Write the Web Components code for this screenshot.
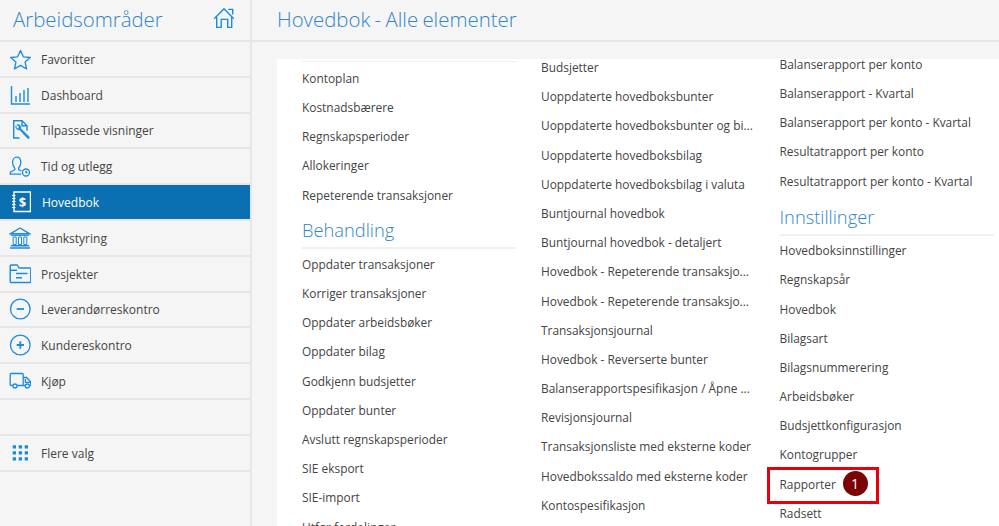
<!DOCTYPE html>
<html lang="no">
<head>
<meta charset="utf-8">
<title>Hovedbok - Alle elementer</title>
<style>
html, body { margin: 0; height: 100%; overflow: hidden; }
body { font: 12px "Open Sans", "Liberation Sans", sans-serif; color: #3f3f3f; background: #f5f5f5; }
svg { display: block; }
</style>
</head>
<body>
<template id="shell-tpl">
    <style>
        :host { display: grid; grid-template-columns: 252px 1fr; height: 526px; overflow: hidden; }
    </style>
    <slot name="side"></slot>
    <slot name="main"></slot>
</template>

<template id="sidebar-tpl">
    <style>
        :host { display: block; height: 526px; box-sizing: border-box; background: #f5f5f5; border-right: 2px solid #e6e6e6; overflow: hidden; }
        header { height: 40px; display: flex; align-items: center; justify-content: space-between; padding: 0 16px 0 13px; border-bottom: 2px solid #e6e6e6; }
        h1 { margin: 0 0 2px; font: 300 20.4px "Open Sans", sans-serif; color: #2f86c9; }
        ::slotted(svg) { margin-bottom: 5px; }
    </style>
    <header><h1 class="title"></h1><slot name="home"></slot></header>
    <slot></slot>
</template>

<template id="nav-item-tpl">
    <style>
        :host { display: flex; align-items: center; height: 35.8px; box-sizing: border-box; border-bottom: 2px solid #e6e6e6; color: #444; padding-left: 9px; gap: 10px; }
        :host([active]) { background: #0a70b2; color: #fff; }
        :host([active]) .label { margin-left: 1px; }
        .icon { width: 22px; height: 22px; flex: none; color: #1a8cde; }
        .label { padding-top: 1px; }
        :host([active]) .icon { color: #fff; }
    </style>
    <div class="icon"><slot name="icon"></slot></div>
    <span class="label"><slot></slot></span>
</template>

<template id="main-tpl">
    <style>
        :host { display: block; height: 526px; overflow: hidden; }
        header { height: 40px; display: flex; align-items: center; padding-left: 25px; border-bottom: 2px solid #e6e6e6; }
        h2 { margin: 0 0 3px; font: 300 20.4px "Open Sans", sans-serif; color: #2f86c9; word-spacing: -1px; }
        .panel { margin: 17px 0 0 25px; height: 467px; background: #fff; padding-left: 25px; display: grid; grid-template-columns: repeat(3, 214px); column-gap: 25px; overflow: hidden; align-items: start; font-size: 11.9px; }
    </style>
    <header><h2 class="title"></h2></header>
    <div class="panel"><slot></slot></div>
</template>

<template id="menu-column-tpl">
    <style>
        :host { display: block; }
    </style>
    <slot></slot>
</template>

<template id="menu-section-tpl">
    <style>
        :host { display: block; }
        h3 { margin: 0; height: 34px; box-sizing: border-box; font: 300 18.3px/29px "Open Sans", sans-serif; color: #2f86c9; border-bottom: 2px solid #f0f0f0; }
    </style>
    <h3 class="title"></h3>
    <slot></slot>
</template>

<template id="menu-link-tpl">
    <style>
        :host { display: flex; align-items: center; height: 29.2px; color: #444; white-space: nowrap; position: relative; }
        :host([marked]) .mark { display: block; }
        .mark { display: none; position: absolute; left: -13px; top: -2px; width: 112px; height: 37px; box-sizing: border-box; border: 3px solid #e8000d; }
        .badge { display: none; position: absolute; left: 63px; top: 2px; width: 25px; height: 25px; border-radius: 50%; background: #7a0303; color: #fff; font-size: 14px; line-height: 25px; text-align: center; }
        :host([marked]) .badge { display: block; }
    </style>
    <slot></slot>
    <div class="mark"></div>
    <div class="badge"></div>
</template>

<app-shell>
    <side-bar slot="side" heading="Arbeidsområder">
        <svg slot="home" width="21" height="21" viewBox="0 0 21 21" fill="none" stroke="#1a8cde" stroke-width="1.4"><path d="M1.2 11.800 11 1.800l9.800 10"/><path d="M3.700 10v10.400h4.500v-8h6.500v8h4V10"/><path d="M15.300 2.400h4.400v5"/></svg>
        <nav-item>
            <svg slot="icon" width="22" height="22" viewBox="0 0 22 22" fill="none" stroke="currentColor" stroke-width="1.300" stroke-linejoin="round"><path d="M11.500 2.500l2.900 6.300 6.900.7-5.200 4.600 1.500 6.900-6.100-3.600-6.100 3.600 1.500-6.900-5.200-4.600 6.900-.7z"/></svg>
            Favoritter
        </nav-item>
        <nav-item>
            <svg slot="icon" width="22" height="22" viewBox="0 0 22 22" fill="none" stroke="currentColor" stroke-width="1.400"><path d="M2.500 2v18h18.500"/><path d="M7 12v6M11 9v9M15 6v12M19 4v14"/></svg>
            Dashboard
        </nav-item>
        <nav-item>
            <svg slot="icon" width="22" height="22" viewBox="0 0 22 22" fill="none" stroke="currentColor" stroke-width="1.400"><path d="M10.500 19H4.700V1.700H13l5 5v5"/><path d="M13 1.700v5h5"/><path d="M7 6.500c-1 2.500 1 5 3.500 4.300l8 8.500c1 1 2.500-.5 1.600-1.600l-8.300-8.300c.7-2.500-1.500-4.600-4-3.800l2.200 2-.5 1.800-1.800.4z" fill="currentColor" stroke-width=".5"/></svg>
            Tilpassede visninger
        </nav-item>
        <nav-item>
            <svg slot="icon" width="22" height="22" viewBox="0 0 22 22" fill="none" stroke="currentColor" stroke-width="1.300"><path d="M5.800 13c-1.600-1.700-2.200-3.700-2.200-5.800 0-3 1.800-5 4.200-5s4 2 4 5c0 2.100-.6 4.100-2.200 5.800v1.700l2.800 1.300"/><path d="M5.800 13v1.700l-4.500 2.500v2h11"/><circle cx="17" cy="17.500" r="3.500"/><path d="M17 15.700v1.800h1.600"/></svg>
            Tid og utlegg
        </nav-item>
        <nav-item active>
            <svg slot="icon" width="22" height="22" viewBox="0 0 22 22" fill="none" stroke="currentColor" stroke-width="1.400"><path d="M5 1h16.500v19.500H5z"/><path d="M3 4.500h3.500M3 7.500h3.500M3 10.500h3.500M3 13.500h3.500M3 16.500h3.500" stroke-width="1.200"/><text x="13.500" y="15.500" font-size="13" font-weight="700" text-anchor="middle" fill="currentColor" stroke="none">$</text></svg>
            Hovedbok
        </nav-item>
        <nav-item>
            <svg slot="icon" width="22" height="22" viewBox="0 0 22 22" fill="none" stroke="currentColor"><path d="M11 1 1.300 6.800h19.400z" stroke-width="1.400"/><path d="M2 8.200h18" stroke-width="1.400"/><path d="M4.200 10h3v7.500h-3zM9.500 10h3v7.500h-3zM14.800 10h3v7.500h-3z" stroke-width="1"/><path d="M2 18.800h18M1 21h20" stroke-width="1.400"/></svg>
            Bankstyring
        </nav-item>
        <nav-item>
            <svg slot="icon" width="22" height="22" viewBox="0 0 22 22" fill="none" stroke="currentColor" stroke-width="1.400" stroke-linejoin="round"><path d="M1.200 3v15.500a1 1 0 0 0 1 1h18.600a1 1 0 0 0 1-1V6a1 1 0 0 0-1-1H10L8.300 2H2.200a1 1 0 0 0-1 1z"/><path d="M1.200 7.300H8M7 10.500h11.500M7 14.800h6"/></svg>
            Prosjekter
        </nav-item>
        <nav-item>
            <svg slot="icon" width="22" height="22" viewBox="0 0 22 22" fill="none" stroke="currentColor" stroke-width="1.300"><circle cx="11.300" cy="11" r="9.800"/><path d="M7.700 11h7.300" stroke-width="1.800"/></svg>
            Leverandørreskontro
        </nav-item>
        <nav-item>
            <svg slot="icon" width="22" height="22" viewBox="0 0 22 22" fill="none" stroke="currentColor" stroke-width="1.300"><circle cx="11.300" cy="11" r="9.800"/><path d="M7.700 11h7.300M11.300 7.300v7.400" stroke-width="1.800"/></svg>
            Kundereskontro
        </nav-item>
        <nav-item>
            <svg slot="icon" width="22" height="22" viewBox="0 0 22 22" fill="none" stroke="currentColor" stroke-width="1.300" stroke-linejoin="round"><path d="M3.800 15.500H2.200a1 1 0 0 1-1-1V4.500a1 1 0 0 1 1-1h11a1 1 0 0 1 1 1v11H8.300"/><path d="M14.200 7.500h3.500l4 4.500v3.500h-1.200M14.200 15.500h1.900M16.300 9v3.300h5"/><circle cx="6" cy="16" r="2"/><circle cx="18.300" cy="16" r="2"/></svg>
            Kjøp
        </nav-item>
        <nav-item></nav-item>
        <nav-item>
            <svg slot="icon" width="22" height="22" viewBox="0 0 22 22" fill="currentColor"><path d="M3.700 3.300H7v3.300H3.700zM9.700 3.300H13v3.300H9.700zM15.700 3.300H19v3.300h-3.300zM3.700 9.300H7v3.300H3.700zM9.700 9.300H13v3.300H9.700zM15.700 9.300H19v3.300h-3.300zM3.700 15.300H7v3.300H3.700zM9.700 15.300H13v3.300H9.700zM15.700 15.300H19v3.300h-3.300z"/></svg>
            Flere valg
        </nav-item>
    </side-bar>

    <main-view slot="main" heading="Hovedbok - Alle elementer">
        <menu-column style="margin-top:2px">
            <div style="height:1px;background:#f0f0f0;margin-bottom:1.300px"></div>
            <menu-link>Kontoplan</menu-link>
            <menu-link>Kostnadsbærere</menu-link>
            <menu-link>Regnskapsperioder</menu-link>
            <menu-link>Allokeringer</menu-link>
            <menu-link>Repeterende transaksjoner</menu-link>
            <menu-section heading="Behandling" style="margin-top:6px">
                <menu-link>Oppdater transaksjoner</menu-link>
                <menu-link>Korriger transaksjoner</menu-link>
                <menu-link>Oppdater arbeidsbøker</menu-link>
                <menu-link>Oppdater bilag</menu-link>
                <menu-link>Godkjenn budsjetter</menu-link>
                <menu-link>Oppdater bunter</menu-link>
                <menu-link>Avslutt regnskapsperioder</menu-link>
                <menu-link>SIE eksport</menu-link>
                <menu-link>SIE-import</menu-link>
                <menu-link>Utfør fordelinger</menu-link>
            </menu-section>
        </menu-column>
        <menu-column style="margin-top:-6.600px">
            <menu-link>Budsjetter</menu-link>
            <menu-link>Uoppdaterte hovedboksbunter</menu-link>
            <menu-link>Uoppdaterte hovedboksbunter og bi...</menu-link>
            <menu-link>Uoppdaterte hovedboksbilag</menu-link>
            <menu-link>Uoppdaterte hovedboksbilag i valuta</menu-link>
            <menu-link>Buntjournal hovedbok</menu-link>
            <menu-link>Buntjournal hovedbok - detaljert</menu-link>
            <menu-link>Hovedbok - Repeterende transaksjo...</menu-link>
            <menu-link>Hovedbok - Repeterende transaksjo...</menu-link>
            <menu-link>Transaksjonsjournal</menu-link>
            <menu-link>Hovedbok - Reverserte bunter</menu-link>
            <menu-link>Balanserapportspesifikasjon / Åpne ...</menu-link>
            <menu-link>Revisjonsjournal</menu-link>
            <menu-link>Transaksjonsliste med eksterne koder</menu-link>
            <menu-link>Hovedbokssaldo med eksterne koder</menu-link>
            <menu-link>Kontospesifikasjon</menu-link>
        </menu-column>
        <menu-column style="margin:-9.700px 0 0 -.5px">
            <menu-link>Balanserapport per konto</menu-link>
            <menu-link>Balanserapport - Kvartal</menu-link>
            <menu-link>Balanserapport per konto - Kvartal</menu-link>
            <menu-link>Resultatrapport per konto</menu-link>
            <menu-link>Resultatrapport per konto - Kvartal</menu-link>
            <menu-section heading="Innstillinger" style="margin-top:6.300px">
                <menu-link>Hovedboksinnstillinger</menu-link>
                <menu-link>Regnskapsår</menu-link>
                <menu-link>Hovedbok</menu-link>
                <menu-link>Bilagsart</menu-link>
                <menu-link>Bilagsnummerering</menu-link>
                <menu-link>Arbeidsbøker</menu-link>
                <menu-link>Budsjettkonfigurasjon</menu-link>
                <menu-link>Kontogrupper</menu-link>
                <menu-link marked badge="1">Rapporter</menu-link>
                <menu-link>Radsett</menu-link>
            </menu-section>
        </menu-column>
    </main-view>
</app-shell>

<script>
class TemplateElement extends HTMLElement {
    constructor(tplId) {
        super()
        this._shadowRoot = this.attachShadow({ mode: 'open' })
        this._shadowRoot.appendChild(document.getElementById(tplId).content.cloneNode(true))
        this.$title = this._shadowRoot.querySelector('.title')
    }

    connectedCallback() {
        if (this.$title) this.$title.textContent = this.getAttribute('heading')
    }
}

class AppShell extends TemplateElement { constructor() { super('shell-tpl') } }
class SideBar extends TemplateElement { constructor() { super('sidebar-tpl') } }
class NavItem extends TemplateElement { constructor() { super('nav-item-tpl') } }
class MainView extends TemplateElement { constructor() { super('main-tpl') } }
class MenuColumn extends TemplateElement { constructor() { super('menu-column-tpl') } }
class MenuSection extends TemplateElement { constructor() { super('menu-section-tpl') } }

class MenuLink extends TemplateElement {
    constructor() {
        super('menu-link-tpl')
        this.$badge = this._shadowRoot.querySelector('.badge')
    }

    connectedCallback() {
        if (this.hasAttribute('badge')) this.$badge.textContent = this.getAttribute('badge')
    }
}

customElements.define('app-shell', AppShell)
customElements.define('side-bar', SideBar)
customElements.define('nav-item', NavItem)
customElements.define('main-view', MainView)
customElements.define('menu-column', MenuColumn)
customElements.define('menu-section', MenuSection)
customElements.define('menu-link', MenuLink)
</script>
</body>
</html>
